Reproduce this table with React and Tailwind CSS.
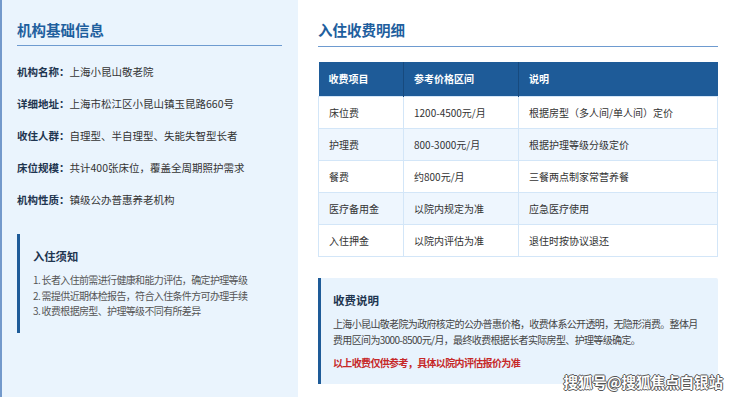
import React from "react";

const info = [
  ["机构名称：", "上海小昆山敬老院"],
  ["详细地址：", "上海市松江区小昆山镇玉昆路660号"],
  ["收住人群：", "自理型、半自理型、失能失智型长者"],
  ["床位规模：", "共计400张床位，覆盖全周期照护需求"],
  ["机构性质：", "镇级公办普惠养老机构"],
];

const notes = [
  "1. 长者入住前需进行健康和能力评估，确定护理等级",
  "2. 需提供近期体检报告，符合入住条件方可办理手续",
  "3. 收费根据房型、护理等级不同有所差异",
];

const fees = [
  ["床位费", "1200-4500元/月", "根据房型（多人间/单人间）定价"],
  ["护理费", "800-3000元/月", "根据护理等级分级定价"],
  ["餐费", "约800元/月", "三餐两点制家常营养餐"],
  ["医疗备用金", "以院内规定为准", "应急医疗使用"],
  ["入住押金", "以院内评估为准", "退住时按协议退还"],
];

export default function App() {
  return (
    <div className="relative flex h-[397px] w-[740px] overflow-hidden bg-white font-['Noto_Sans_CJK_SC','Noto_Sans',sans-serif]">
      {/* Left panel */}
      <div className="w-[298px] shrink-0 border-l-2 border-[#7399cb] bg-[#eaf4fd] pl-[15px] pr-[16px]">
        <h2 className="mt-[20px] border-b border-[#6e9bd0] pb-[5px] text-[14.5px] font-bold leading-[20px] text-[#1f5f9e]">
          机构基础信息
        </h2>

        <div className="mt-[10px]">
          {info.map(([label, value]) => (
            <div key={label} className="flex h-8 items-center text-[10.5px] leading-[20px]">
              <span className="font-bold text-[#1e3550]">{label}</span>
              <span className="text-[#333]">{value}</span>
            </div>
          ))}
        </div>

        <div className="mt-[18px] border-l-[3px] border-[#1e5b98] pl-[13px] pt-[14px] pb-[14px]">
          <h3 className="text-[11.3px] font-bold leading-[16px] text-[#1e3550]">入住须知</h3>
          {/* text under 10px renders at 10px here, so tighten the tracking instead */}
          <div className="mt-[8px]">
            {notes.map((n) => (
              <p key={n} className="text-[10px] leading-[15.5px] tracking-[-0.65px] text-[#555]">
                {n}
              </p>
            ))}
          </div>
        </div>
      </div>

      {/* Right panel */}
      <div className="flex-1 pl-[20px] pr-[22px]">
        <h2 className="mt-[20px] border-b border-[#6e9bd0] pb-[6px] text-[14.5px] font-bold leading-[20px] text-[#1f5f9e]">
          入住收费明细
        </h2>

        <table className="mt-[15px] w-full table-fixed border-collapse text-[10px]">
          <colgroup>
            <col className="w-[85px]" />
            <col className="w-[115px]" />
            <col />
          </colgroup>
          <thead>
            <tr className="h-[34px] bg-[#1e5b98] text-left text-white">
              <th className="border-r border-[#174a7e] pl-[10px] font-bold">收费项目</th>
              <th className="border-r border-[#174a7e] pl-[10px] font-bold">参考价格区间</th>
              <th className="pl-[10px] font-bold">说明</th>
            </tr>
          </thead>
          <tbody>
            {fees.map((row, i) => (
              <tr key={row[0]} className={`h-[32px] ${i % 2 === 1 ? "bg-[#eef6fe]" : "bg-white"}`}>
                {row.map((cell, j) => (
                  <td
                    key={j}
                    className="border border-[#d3e6f8] pl-[10px] text-[#333]"
                  >
                    {cell}
                  </td>
                ))}
              </tr>
            ))}
          </tbody>
        </table>

        <div className="mt-[21px] rounded-r-[2px] border-l-[3px] border-[#1e5b98] bg-[#e8f3fd] pl-[12px] pr-[14px] pt-[14px] pb-[13px]">
          <h3 className="text-[11.5px] font-bold leading-[16px] text-[#1e3550]">收费说明</h3>
          <p className="mt-[8px] text-[10px] leading-[16px] tracking-[-0.65px] text-[#444]">
            上海小昆山敬老院为政府核定的公办普惠价格，收费体系公开透明，无隐形消费。整体月费用区间为3000-8500元/月，最终收费根据长者实际房型、护理等级确定。
          </p>
          <p className="mt-[7px] text-[10px] font-bold leading-[16px] tracking-[-0.65px] text-[#c62828]">
            以上收费仅供参考，具体以院内评估报价为准
          </p>
        </div>
      </div>

      {/* Watermark */}
      <div className="absolute bottom-[5px] right-[17px] text-[14.5px] font-bold leading-[20px] text-white [text-shadow:1px_0_#555,-1px_0_#555,0_1px_#555,0_-1px_#555]">
        搜狐号@搜狐焦点白银站
      </div>
    </div>
  );
}
